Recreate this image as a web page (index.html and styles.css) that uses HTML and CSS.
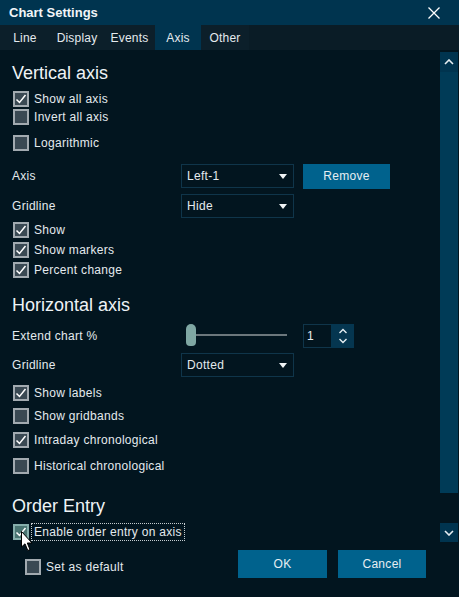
FILE: index.html
```html
<!DOCTYPE html>
<html lang="en">
<head>
  <meta charset="UTF-8">
  <title>Chart Settings</title>
  <link rel="stylesheet" href="styles.css">
</head>
<body>

<div class="dialog">
  <div class="titlebar">
    <span class="title">Chart Settings</span>
    <svg class="close" width="12" height="12" viewBox="0 0 12 12"><path d="M0.5 0.5 L11.5 11.5 M11.5 0.5 L0.5 11.5" stroke="#fff" stroke-width="1.3" fill="none"/></svg>
  </div>

  <div class="tabs">
    <span class="tab tab-line">Line</span>
    <span class="tab tab-display">Display</span>
    <span class="tab tab-events">Events</span>
    <span class="tab tab-axis active">Axis</span>
    <span class="tab tab-other">Other</span>
  </div>

  <div class="main">
    <div class="content">
      <h3 class="section">Vertical axis</h3>

      <label class="check mt-6"><span class="box on"><svg viewBox="0 0 12 12"><path d="M1.5 6.5 L4.5 9.5 L10.5 2" /></svg></span>Show all axis</label>
      <label class="check"><span class="box"></span>Invert all axis</label>
      <label class="check mt-8"><span class="box"></span>Logarithmic</label>

      <div class="field mt-12">
        <span class="field-label">Axis</span>
        <div class="select">Left-1<i class="caret"></i></div>
        <button class="btn btn-remove">Remove</button>
      </div>
      <div class="field mt-6">
        <span class="field-label">Gridline</span>
        <div class="select">Hide<i class="caret"></i></div>
      </div>

      <label class="check mt-3"><span class="box on"><svg viewBox="0 0 12 12"><path d="M1.5 6.5 L4.5 9.5 L10.5 2" /></svg></span>Show</label>
      <label class="check mt-2"><span class="box on"><svg viewBox="0 0 12 12"><path d="M1.5 6.5 L4.5 9.5 L10.5 2" /></svg></span>Show markers</label>
      <label class="check mt-2"><span class="box on"><svg viewBox="0 0 12 12"><path d="M1.5 6.5 L4.5 9.5 L10.5 2" /></svg></span>Percent change</label>

      <h3 class="section mt-15">Horizontal axis</h3>

      <div class="field mt-8">
        <span class="field-label">Extend chart %</span>
        <div class="slider">
          <span class="slider-thumb"></span>
          <span class="slider-track"></span>
        </div>
        <div class="spin">
          <span class="spin-value">1</span>
          <span class="spin-arrows">
            <svg width="10" height="18" viewBox="0 0 10 18"><path d="M1.5 6 L5 2.5 L8.5 6 M1.5 12 L5 15.5 L8.5 12" stroke="#e6eef2" stroke-width="1.4" fill="none"/></svg>
          </span>
        </div>
      </div>
      <div class="field mt-5">
        <span class="field-label">Gridline</span>
        <div class="select">Dotted<i class="caret"></i></div>
      </div>

      <label class="check mt-7"><span class="box on"><svg viewBox="0 0 12 12"><path d="M1.5 6.5 L4.5 9.5 L10.5 2" /></svg></span>Show labels</label>
      <label class="check mt-5"><span class="box"></span>Show gridbands</label>
      <label class="check mt-6"><span class="box on"><svg viewBox="0 0 12 12"><path d="M1.5 6.5 L4.5 9.5 L10.5 2" /></svg></span>Intraday chronological</label>
      <label class="check mt-8"><span class="box"></span>Historical chronological</label>

      <h3 class="section mt-20">Order Entry</h3>

      <label class="check mt-6"><span class="box on hover"><svg viewBox="0 0 12 12"><path d="M1.5 6.5 L4.5 9.5 L10.5 2" /></svg></span><span class="focus">Enable order entry on axis</span></label>
    </div>

    <div class="scrollbar">
      <span class="scroll-btn up">
        <svg width="10" height="6" viewBox="0 0 10 6"><path d="M1 5 L5 1 L9 5" stroke="#e6eef2" stroke-width="1.6" fill="none"/></svg>
      </span>
      <span class="scroll-thumb"></span>
      <span class="scroll-btn down">
        <svg width="10" height="6" viewBox="0 0 10 6"><path d="M1 1 L5 5 L9 1" stroke="#e6eef2" stroke-width="1.6" fill="none"/></svg>
      </span>
    </div>
  </div>

  <div class="footer">
    <label class="check default"><span class="box"></span>Set as default</label>
    <div class="actions">
      <button class="btn btn-ok">OK</button>
      <button class="btn btn-cancel">Cancel</button>
    </div>
  </div>

  <!-- mouse pointer resting on the order entry checkbox -->
  <svg class="cursor" width="13" height="21" viewBox="0 0 13 21"><path d="M0.5 0.5 L0.5 16 L4 12.8 L6.8 19.5 L9 18.6 L6.3 12 L11 12 Z" fill="#fff" stroke="#000" stroke-width="1"/></svg>
</div>

</body>
</html>
```

FILE: styles.css
```css
body {
  margin: 0;
  background-color: #02151f;
  font-family: "Liberation Sans", Arial, sans-serif;
  font-size: 12px;
  color: #e4eaee;
}
.dialog {
  position: relative;
  width: 459px;
  height: 597px;
  background-color: #02151f;
}

/* title bar */
.titlebar {
  height: 25px;
  background-color: #00344f;
  display: flex;
  align-items: center;
  justify-content: space-between;
  padding: 0 19px 0 9px;
}
.title {
  font-size: 13px;
  font-weight: bold;
  color: #f2f6f8;
}
.close { display: block; }

/* tabs */
.tabs {
  height: 25px;
  background-color: #0a1c26;
  display: flex;
}
.tab {
  display: flex;
  align-items: center;
  justify-content: center;
  background-color: #0c1f2a;
  color: #e4eaee;
  letter-spacing: 0.2px;
}
.tab.active { background-color: #00344f; }
.tab-line { width: 50px; }
.tab-display { width: 54px; }
.tab-events { width: 51px; }
.tab-axis { width: 46px; }
.tab-other { width: 48px; }

/* scrolling area */
.main {
  display: flex;
  height: 495px;
  overflow: hidden;
}
.content {
  flex: 1;
  padding: 12px 0 0 12px;
  display: flex;
  flex-direction: column;
  align-items: flex-start;
  letter-spacing: 0.3px;
}
.section {
  margin: 0;
  font-size: 18px;
  font-weight: normal;
  line-height: 22px;
  letter-spacing: 0;
  color: #eef3f6;
}

.check {
  display: flex;
  align-items: center;
  height: 18px;
  gap: 5px;
  padding-left: 1px;
  white-space: nowrap;
  letter-spacing: 0.3px;
}
.box {
  width: 16px;
  height: 16px;
  box-sizing: border-box;
  border: 2px solid #a2aab0;
  background-color: #3a4953;
  display: flex;
  align-items: center;
  justify-content: center;
}
.box svg {
  width: 12px;
  height: 12px;
  fill: none;
  stroke: #fff;
  stroke-width: 1.5;
}
.box.hover {
  border-color: #86aeab;
  background-color: #4a7572;
}
.focus {
  outline: 1px dotted #c4ccd0;
  padding: 1px 2px;
  margin-left: -2px;
}

.field {
  display: flex;
  align-items: center;
  height: 24px;
}
.field-label {
  width: 169px;
  flex-shrink: 0;
}
.select {
  width: 113px;
  height: 24px;
  box-sizing: border-box;
  border: 1px solid #0f354a;
  display: flex;
  align-items: center;
  justify-content: space-between;
  padding: 0 6px 0 5px;
}
.caret {
  width: 0;
  height: 0;
  border-left: 4px solid transparent;
  border-right: 4px solid transparent;
  border-top: 5px solid #f0f4f6;
}

.btn {
  font-family: "Liberation Sans", Arial, sans-serif;
  font-size: 12px;
  letter-spacing: 0.3px;
  color: #e6eef2;
  background-color: #00628d;
  border: none;
  padding: 0;
}
.btn-remove {
  width: 87px;
  height: 25px;
  margin-left: 9px;
}

/* extend chart slider and spinner */
.slider {
  position: relative;
  width: 101px;
  height: 24px;
  margin-left: 5px;
}
.slider-thumb {
  position: absolute;
  left: 0;
  top: 0;
  width: 10px;
  height: 22px;
  border-radius: 5px 5px 4px 4px;
  background-color: #7fa7a3;
  z-index: 1;
}
.slider-track {
  position: absolute;
  left: 8px;
  right: 0;
  top: 10px;
  height: 2px;
  background-color: #6c777c;
}
.spin {
  display: flex;
  height: 24px;
  margin-left: 16px;
}
.spin-value {
  width: 28px;
  box-sizing: border-box;
  border: 1px solid #0f354a;
  border-right: none;
  padding-left: 3px;
  display: flex;
  align-items: center;
}
.spin-arrows {
  width: 23px;
  background-color: #053650;
  display: flex;
  align-items: center;
  justify-content: center;
}
.spin-arrows svg { display: block; }

/* scrollbar */
.scrollbar {
  width: 18px;
  margin-right: 1px;
  padding-top: 2px;
  display: flex;
  flex-direction: column;
}
.scroll-btn {
  height: 20px;
  background-color: #00344f;
  display: flex;
  align-items: center;
  justify-content: center;
}
.scroll-btn.down {
  height: 19px;
  margin-top: 30px;
}
.scroll-thumb {
  height: 421px;
  background-color: #003b57;
}

/* footer */
.footer {
  display: flex;
  align-items: flex-start;
  padding: 5px 33px 0 24px;
}
.default { margin-top: 8px; }
.actions {
  margin-left: auto;
  display: flex;
  gap: 11px;
}
.btn-ok,
.btn-cancel {
  width: 89px;
  height: 28px;
}
.btn-cancel { width: 88px; }

.cursor {
  position: absolute;
  left: 21px;
  top: 531px;
}

.mt-2 { margin-top: 2px; }
.mt-3 { margin-top: 3px; }
.mt-4 { margin-top: 4px; }
.mt-5 { margin-top: 5px; }
.mt-6 { margin-top: 6px; }
.mt-7 { margin-top: 7px; }
.mt-8 { margin-top: 8px; }
.mt-9 { margin-top: 9px; }
.mt-12 { margin-top: 12px; }
.mt-15 { margin-top: 15px; }
.mt-20 { margin-top: 20px; }
```
